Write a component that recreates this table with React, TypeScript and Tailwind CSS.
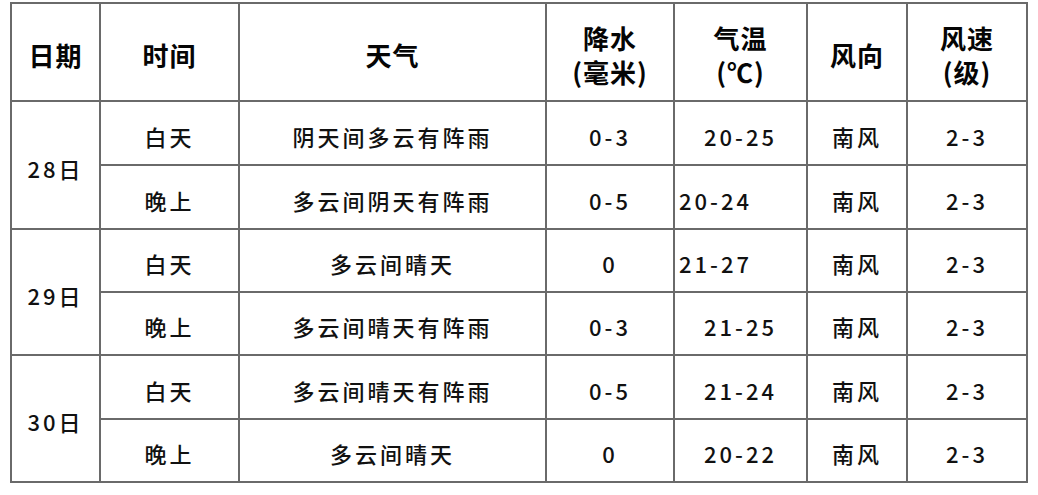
import React from "react"

type Row = {
  time: string
  weather: string
  rain: string
  temp: string
  tempLeft?: boolean
  dir: string
  speed: string
  h: string
}

type Day = { date: string; rows: [Row, Row] }

const days: Day[] = [
  {
    date: "28日",
    rows: [
      { time: "白天", weather: "阴天间多云有阵雨", rain: "0-3", temp: "20-25", dir: "南风", speed: "2-3", h: "h-[64px]" },
      { time: "晚上", weather: "多云间阴天有阵雨", rain: "0-5", temp: "20-24", tempLeft: true, dir: "南风", speed: "2-3", h: "h-[64px]" },
    ],
  },
  {
    date: "29日",
    rows: [
      { time: "白天", weather: "多云间晴天", rain: "0", temp: "21-27", tempLeft: true, dir: "南风", speed: "2-3", h: "h-[63px]" },
      { time: "晚上", weather: "多云间晴天有阵雨", rain: "0-3", temp: "21-25", dir: "南风", speed: "2-3", h: "h-[63px]" },
    ],
  },
  {
    date: "30日",
    rows: [
      { time: "白天", weather: "多云间晴天有阵雨", rain: "0-5", temp: "21-24", dir: "南风", speed: "2-3", h: "h-[64px]" },
      { time: "晚上", weather: "多云间晴天", rain: "0", temp: "20-22", dir: "南风", speed: "2-3", h: "h-[63px]" },
    ],
  },
]

const cell = "border-2 border-[#6a6a6a] p-0 pt-[6px] align-middle text-center"
const body = "text-[22px] font-medium tracking-[3px] text-[#111]"

export default function App() {
  return (
    <div className="min-h-[495px] w-[1038px] bg-white pl-[10px] pt-[2px] font-['Noto_Sans_CJK_SC',sans-serif]">
      <table className="w-[1016px] table-fixed border-collapse">
        <colgroup>
          <col className="w-[89px]" />
          <col className="w-[139px]" />
          <col className="w-[307px]" />
          <col className="w-[128px]" />
          <col className="w-[133px]" />
          <col className="w-[100px]" />
          <col className="w-[120px]" />
        </colgroup>
        <thead>
          <tr className="h-[98px] text-[26px] font-black leading-[34px] tracking-[1px] text-[#050505]">
            <th className={cell}>日期</th>
            <th className={cell}>时间</th>
            <th className={cell}>天气</th>
            <th className={cell}>
              降水
              <br />
              (毫米)
            </th>
            <th className={cell}>
              气温
              <br />
              (℃)
            </th>
            <th className={cell}>风向</th>
            <th className={cell}>
              风速
              <br />
              (级)
            </th>
          </tr>
        </thead>
        <tbody className={body}>
          {days.map((d) =>
            d.rows.map((r, i) => (
              <tr key={d.date + r.time} className={r.h}>
                {i === 0 && (
                  <td rowSpan={2} className={cell}>
                    {d.date}
                  </td>
                )}
                <td className={cell}>{r.time}</td>
                <td className={cell}>{r.weather}</td>
                <td className={cell}>{r.rain}</td>
                <td className={`${cell} ${r.tempLeft ? "pl-[4px] text-left" : ""}`}>{r.temp}</td>
                <td className={cell}>{r.dir}</td>
                <td className={cell}>{r.speed}</td>
              </tr>
            ))
          )}
        </tbody>
      </table>
    </div>
  )
}
